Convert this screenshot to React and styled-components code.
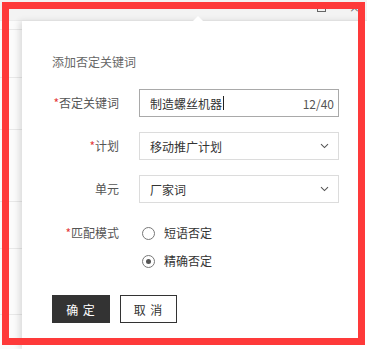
import React from 'react'
import styled, { createGlobalStyle } from 'styled-components'

const Global = createGlobalStyle`
  html, body { margin: 0; padding: 0; background: #fff; }
  body {
    font-family: "Noto Sans CJK SC", "Noto Sans", sans-serif;
    font-size: 12px;
    color: #333;
  }
`

const Chevron = () => (
  <svg width="9" height="6" viewBox="0 0 9 6">
    <path d="M1 1.2 L4.5 4.6 L8 1.2" fill="none" stroke="#555" strokeWidth="1.1" />
  </svg>
)

const App = () => {
  return (
    <Page>
      <Global />
      <TopBar>
        <WinBtn />
        <CloseX>×</CloseX>
      </TopBar>
      <Body>
        <Side>
          {[8, 56, 108, 180, 227, 293].map((t) => (
            <SideLine key={t} $top={t} />
          ))}
        </Side>
        <Popover>
          <Title>添加否定关键词</Title>
          <Form>
            <Row>
              <Label $required>否定关键词</Label>
              <Field $focused>
                <Value>
                  制造螺丝机器<Caret />
                </Value>
                <Count>12/40</Count>
              </Field>
            </Row>
            <Row>
              <Label $required>计划</Label>
              <Field>
                <Value>移动推广计划</Value>
                <Chevron />
              </Field>
            </Row>
            <Row>
              <Label>单元</Label>
              <Field>
                <Value>厂家词</Value>
                <Chevron />
              </Field>
            </Row>
            <RadioRow>
              <Label $required>匹配模式</Label>
              <RadioGroup>
                <RadioItem>
                  <Radio />
                  短语否定
                </RadioItem>
                <RadioItem>
                  <Radio $checked />
                  精确否定
                </RadioItem>
              </RadioGroup>
            </RadioRow>
          </Form>
          <Actions>
            <Button $primary>确 定</Button>
            <Button>取 消</Button>
          </Actions>
        </Popover>
      </Body>
      <Frame />
    </Page>
  )
}

const Page = styled.div`
  position: relative;
  width: 367px;
  height: 349px;
  overflow: hidden;
  display: flex;
  flex-direction: column;
  background: #fff;
`

const TopBar = styled.div`
  height: 20px;
  flex: none;
  background: #f3f3f3;
  border-bottom: 1px solid #ececec;
  position: relative;
`

const WinBtn = styled.div`
  position: absolute;
  left: 317px;
  top: 5px;
  width: 7px;
  height: 5px;
  border: 1px solid #666;
`

const CloseX = styled.div`
  position: absolute;
  left: 349px;
  top: 0px;
  font-size: 13px;
  color: #777;
  font-family: "DejaVu Sans", sans-serif;
`

const Body = styled.div`
  flex: 1;
  display: flex;
  min-height: 0;
`

const Side = styled.div`
  width: 22px;
  flex: none;
  position: relative;
  background: #fbfbfb;
`

const SideLine = styled.div`
  position: absolute;
  left: 0;
  right: 0;
  top: ${(p) => p.$top}px;
  height: 1px;
  background: #e8e8e8;
`

const Popover = styled.div`
  flex: 1;
  position: relative;
  background: #fff;
  box-shadow: -3px 0 6px rgba(0, 0, 0, 0.12);
  padding: 32px 0 0 30px;

  &::before {
    content: '';
    position: absolute;
    left: 171px;
    top: -5px;
    border-left: 5px solid transparent;
    border-right: 5px solid transparent;
    border-bottom: 5px solid #fff;
  }
`

const Title = styled.div`
  font-size: 12px;
  line-height: 18px;
  color: #666;
  margin-bottom: 18px;
`

const Form = styled.div`
  display: flex;
  flex-direction: column;
  gap: 15px;
`

const Row = styled.div`
  display: flex;
  align-items: center;
  gap: 20px;
`

const RadioRow = styled.div`
  display: flex;
  align-items: flex-start;
  gap: 23px;
  margin-top: 6px;
`

const Label = styled.div`
  width: 67px;
  text-align: right;
  color: #555;
  font-size: 12px;
  line-height: 18px;

  &::before {
    content: ${(p) => (p.$required ? "'*'" : 'none')};
    color: #e4393c;
  }
`

const Field = styled.div`
  width: 200px;
  height: 28px;
  box-sizing: border-box;
  border: 1px solid ${(p) => (p.$focused ? '#a9a9a9' : '#dcdcdc')};
  display: flex;
  align-items: center;
  justify-content: space-between;
  padding: 0 9px 0 10px;
  color: #333;
`

const Value = styled.span`
  font-size: 12px;
  display: flex;
  align-items: center;
`

const Caret = styled.span`
  display: inline-block;
  width: 1px;
  height: 14px;
  background: #222;
  margin-left: 1px;
`

const Count = styled.span`
  color: #555;
  font-size: 12px;
  margin-right: -5px;
`

const RadioGroup = styled.div`
  display: flex;
  flex-direction: column;
  gap: 10px;
`

const RadioItem = styled.div`
  display: flex;
  align-items: center;
  gap: 9px;
  line-height: 18px;
  color: #333;
`

const Radio = styled.span`
  width: 13px;
  height: 13px;
  box-sizing: border-box;
  border: 1px solid #777;
  border-radius: 50%;
  display: flex;
  align-items: center;
  justify-content: center;

  &::after {
    content: '';
    display: ${(p) => (p.$checked ? 'block' : 'none')};
    width: 5px;
    height: 5px;
    border-radius: 50%;
    background: #555;
  }
`

const Actions = styled.div`
  display: flex;
  gap: 10px;
  margin-top: 25px;
`

const Button = styled.button`
  height: 28px;
  width: ${(p) => (p.$primary ? '58px' : '57px')};
  box-sizing: border-box;
  border: 1px solid #333;
  background: ${(p) => (p.$primary ? '#333' : '#fff')};
  color: ${(p) => (p.$primary ? '#fff' : '#333')};
  font-family: "Noto Sans CJK SC", sans-serif;
  font-size: 12px;
  padding: 0;
  letter-spacing: 1px;
  cursor: pointer;
`

const Frame = styled.div`
  position: absolute;
  left: 2px;
  top: 2px;
  width: 363px;
  height: 343px;
  box-sizing: border-box;
  border: 7px solid #fe3a3a;
  pointer-events: none;
`

export default App
